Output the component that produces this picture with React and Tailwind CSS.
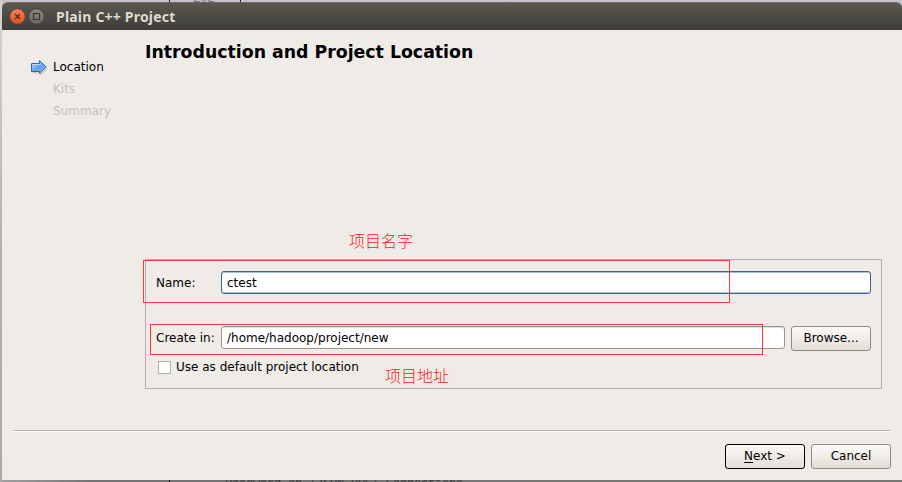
const steps = [
  { label: 'Location', active: true },
  { label: 'Kits', active: false },
  { label: 'Summary', active: false },
];

function StepArrow() {
  return (
    <svg width="18" height="16" viewBox="0 0 18 16" className="block">
      <defs>
        <linearGradient id="arrowFill" x1="0" y1="0" x2="1" y2="1">
          <stop offset="0" stopColor="#c4defc" />
          <stop offset="0.5" stopColor="#5f9ff0" />
          <stop offset="1" stopColor="#8fc2fb" />
        </linearGradient>
      </defs>
      <path d="M2.5 13.5H11V15.5L17 9.5" fill="none" stroke="#000" strokeOpacity="0.12" strokeWidth="2" />
      <path d="M1.5 4.5H9.5V1.7L16.3 8L9.5 14.3V12.5H1.5Z" fill="url(#arrowFill)" stroke="#3b6595" />
      <path d="M2.5 5.5H10.5V4.2" fill="none" stroke="#c8e0fc" strokeOpacity="0.8" />
    </svg>
  );
}

function TitleBar() {
  return (
    <header className="flex h-7 shrink-0 items-center rounded-t-[6px] border-t border-[#6b675c] bg-linear-to-b from-[#5b5850] to-[#3e3d38] pl-[7px]">
      <svg width="36" height="18" viewBox="0 0 36 18" className="block shrink-0">
        <defs>
          <linearGradient id="closeFill" x1="0" y1="0" x2="0" y2="1">
            <stop offset="0" stopColor="#f4845c" />
            <stop offset="1" stopColor="#e24e1d" />
          </linearGradient>
          <linearGradient id="maxFill" x1="0" y1="0" x2="0" y2="1">
            <stop offset="0" stopColor="#8c8981" />
            <stop offset="1" stopColor="#69675f" />
          </linearGradient>
        </defs>
        <circle cx="8.5" cy="8.5" r="7.8" fill="url(#closeFill)" stroke="#4a3a30" strokeWidth="0.8" />
        <path d="M6 6L11 11M11 6L6 11" stroke="#4b2c20" strokeWidth="1.3" />
        <circle cx="27.5" cy="8.5" r="7.8" fill="url(#maxFill)" stroke="#38362f" strokeWidth="0.8" />
        <rect x="24.5" y="5.5" width="6" height="6" fill="none" stroke="#3c3b37" strokeWidth="1.2" />
      </svg>
      <h1 className="ml-[11px] whitespace-nowrap font-['Noto_Sans',sans-serif] text-[14px] font-bold leading-[18px] tracking-[0.2px] text-[#dfdbd2]">
        Plain C++ Project
      </h1>
    </header>
  );
}

function Button({ children, primary }) {
  return (
    <button
      className={
        'h-[25px] w-20 shrink-0 rounded-[3px] border bg-linear-to-b from-[#fbf9f7] via-[#f0ece8] to-[#e4ddd7] text-center leading-[21px] ' +
        (primary ? 'border-black' : 'border-[#8f8982]')
      }
    >
      {children}
    </button>
  );
}

export default function App() {
  return (
    <div className="relative flex h-[482px] w-[902px] flex-col overflow-hidden bg-[#c4c4c8] pl-[2px] pt-[2px] font-['DejaVu_Sans',sans-serif] text-[12px] leading-4 text-black">
      <div className="absolute left-0 top-0 h-[482px] w-[2px] bg-linear-to-b from-[#d4d4d4] via-[#b2b2b2] to-[#a8a8a8]" />
      <div className="absolute left-[169px] top-0 h-[2px] w-px bg-[#222]" />
      <div className="absolute left-[193px] top-0 h-[2px] w-[22px] overflow-hidden font-['Liberation_Mono',monospace] text-[12px] leading-[12px] text-[#777]">
        <span className="relative -top-[7px]">202</span>
      </div>
      <div className="absolute left-[240px] top-0 h-[2px] w-px bg-[#301535]" />

      <TitleBar />

      <main className="flex h-[450px] shrink-0 flex-col bg-[#efebe7]">
        <div className="flex h-[359px] shrink-0">
          <nav className="w-[143px] shrink-0 pl-[28px] pt-[26px]">
            {steps.map((step) => (
              <div
                key={step.label}
                className={'flex h-[22px] items-center ' + (step.active ? 'text-black' : 'text-[#c4c0bc]')}
              >
                <span className="w-[23px]">{step.active && <StepArrow />}</span>
                {step.label}
              </div>
            ))}
          </nav>

          <section className="w-[737px] shrink-0 pt-[10px]">
            <h2 className="h-[219px] whitespace-nowrap text-[17.33px] font-bold leading-6">
              Introduction and Project Location
            </h2>
            <div className="h-[130px] w-[737px] border border-[#b4b0ac] px-[10px] pt-[11px]">
              <div className="flex h-[23px] items-center">
                <label className="w-[65px] shrink-0">Name:</label>
                <div className="h-[23px] flex-1 rounded-[3px] border border-[#46627f] bg-white pl-[5px] pt-px leading-[21px] shadow-[inset_0_1px_0_#a9c0d8,inset_0_-1px_0_#a9c0d8]">
                  ctest
                </div>
              </div>
              <div className="mt-[32px] flex h-[24px] items-start">
                <label className="w-[65px] shrink-0 whitespace-nowrap pt-[4px]">Create in:</label>
                <div className="mr-[6px] h-[23px] flex-1 rounded-[3px] border border-[#9c948e] bg-white pl-[5px] pt-px leading-[21px] shadow-[inset_0_1px_0_#dedad6]">
                  /home/hadoop/project/new
                </div>
                <Button>Browse...</Button>
              </div>
              <label className="mt-[9px] flex items-center pl-[2px]">
                <span className="mr-[5px] h-[13px] w-[13px] border border-[#b4b0ac] bg-white" />
                Use as default project location
              </label>
            </div>
          </section>
        </div>

        <hr className="ml-[11px] mt-[41px] h-[2px] w-[877px] shrink-0 border-0 border-b border-t border-b-white border-t-[#b4b0ac]" />

        <footer className="mt-[12px] flex justify-end gap-[6px] pr-[11px]">
          <Button primary>
            <span className="underline underline-offset-2">N</span>ext &gt;
          </Button>
          <Button>Cancel</Button>
        </footer>
      </main>

      <div className="relative h-[2px] shrink-0 overflow-hidden bg-linear-to-r from-[#a0a0a0] via-[#747474] via-10% to-[#777773]">
        <div className="absolute left-[167px] top-0 h-[2px] w-px bg-[#111]" />
        <div className="absolute left-[223px] top-[-2px] whitespace-pre font-['Liberation_Mono',monospace] text-[12px] leading-[12px] tracking-[-0.2px] text-[#3d3f44]">
          Password on 'JSON-RPC' Connections
        </div>
      </div>

      <div className="absolute left-[143px] top-[260px] h-[43px] w-[587px] border border-[#ff3939]" />
      <div className="absolute left-[150px] top-[324px] h-[31px] w-[613px] border border-[#ff3939]" />
      <div className="absolute left-[349px] top-[230px] whitespace-nowrap font-['Noto_Sans_CJK_SC',sans-serif] text-[16px] font-light leading-5 text-[#ff2020]">
        项目名字
      </div>
      <div className="absolute left-[385px] top-[365px] whitespace-nowrap font-['Noto_Sans_CJK_SC',sans-serif] text-[16px] font-light leading-5 text-[#ff2020]">
        项目地址
      </div>
    </div>
  );
}
